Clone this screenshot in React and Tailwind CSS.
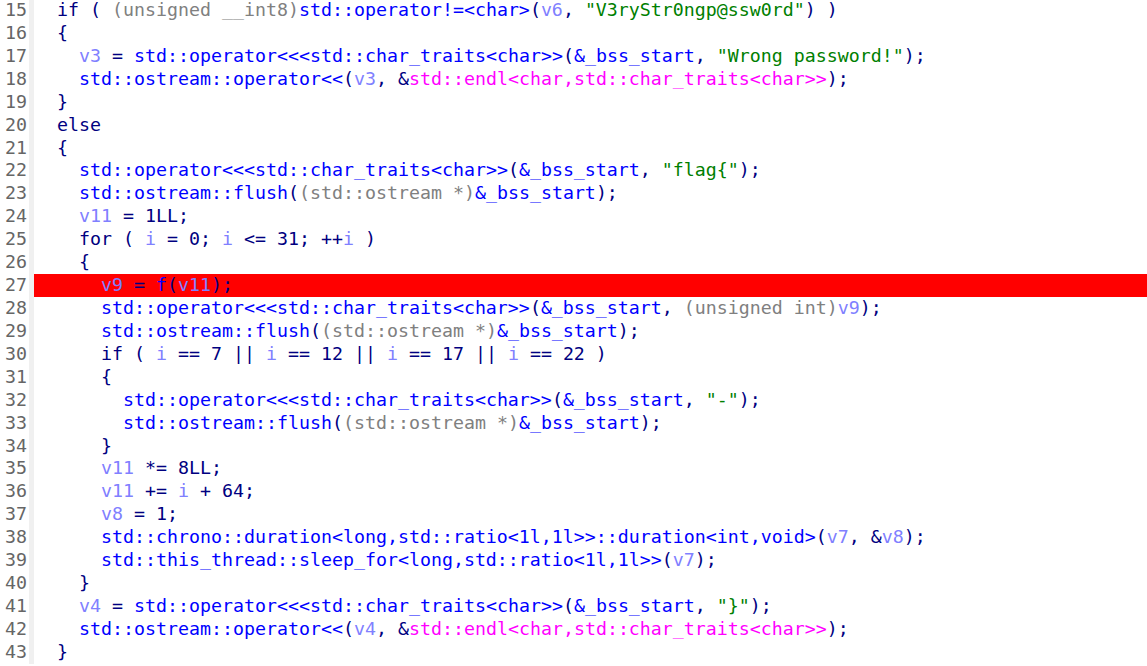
import React from "react";

// n = navy punctuation/keywords, f = names, v = locals, g = casts, s = strings, m = magenta refs
const colors = {
  n: "text-[#000080]",
  f: "text-[#0000ff]",
  v: "text-[#8080ff]",
  g: "text-[#808080]",
  s: "text-[#008000]",
  m: "text-[#ff00ff]",
};

const bssOut = "std::operator<<<std::char_traits<char>>";
const flushLine = (ind) => [
  ["n", ind],
  ["f", "std::ostream::flush"],
  ["n", "("],
  ["g", "(std::ostream *)"],
  ["f", "&_bss_start"],
  ["n", ");"],
];

const lines = [
  [15, [["n", "  if ( "], ["g", "(unsigned __int8)"], ["f", "std::operator!=<char>"], ["n", "("], ["v", "v6"], ["n", ", "], ["s", '"V3ryStr0ngp@ssw0rd"'], ["n", ") )"]]],
  [16, [["n", "  {"]]],
  [17, [["n", "    "], ["v", "v3"], ["n", " = "], ["f", bssOut], ["n", "("], ["f", "&_bss_start"], ["n", ", "], ["s", '"Wrong password!"'], ["n", ");"]]],
  [18, [["n", "    "], ["f", "std::ostream::operator<<"], ["n", "("], ["v", "v3"], ["n", ", &"], ["m", "std::endl<char,std::char_traits<char>>"], ["n", ");"]]],
  [19, [["n", "  }"]]],
  [20, [["n", "  else"]]],
  [21, [["n", "  {"]]],
  [22, [["n", "    "], ["f", bssOut], ["n", "("], ["f", "&_bss_start"], ["n", ", "], ["s", '"flag{"'], ["n", ");"]]],
  [23, flushLine("    ")],
  [24, [["n", "    "], ["v", "v11"], ["n", " = 1LL;"]]],
  [25, [["n", "    for ( "], ["v", "i"], ["n", " = 0; "], ["v", "i"], ["n", " <= 31; ++"], ["v", "i"], ["n", " )"]]],
  [26, [["n", "    {"]]],
  [27, [["n", "      "], ["v", "v9"], ["n", " = "], ["f", "f"], ["n", "("], ["v", "v11"], ["n", ");"]], true],
  [28, [["n", "      "], ["f", bssOut], ["n", "("], ["f", "&_bss_start"], ["n", ", "], ["g", "(unsigned int)"], ["v", "v9"], ["n", ");"]]],
  [29, flushLine("      ")],
  [30, [["n", "      if ( "], ["v", "i"], ["n", " == 7 || "], ["v", "i"], ["n", " == 12 || "], ["v", "i"], ["n", " == 17 || "], ["v", "i"], ["n", " == 22 )"]]],
  [31, [["n", "      {"]]],
  [32, [["n", "        "], ["f", bssOut], ["n", "("], ["f", "&_bss_start"], ["n", ", "], ["s", '"-"'], ["n", ");"]]],
  [33, flushLine("        ")],
  [34, [["n", "      }"]]],
  [35, [["n", "      "], ["v", "v11"], ["n", " *= 8LL;"]]],
  [36, [["n", "      "], ["v", "v11"], ["n", " += "], ["v", "i"], ["n", " + 64;"]]],
  [37, [["n", "      "], ["v", "v8"], ["n", " = 1;"]]],
  [38, [["n", "      "], ["f", "std::chrono::duration<long,std::ratio<1l,1l>>::duration<int,void>"], ["n", "("], ["v", "v7"], ["n", ", &"], ["v", "v8"], ["n", ");"]]],
  [39, [["n", "      "], ["f", "std::this_thread::sleep_for<long,std::ratio<1l,1l>>"], ["n", "("], ["v", "v7"], ["n", ");"]]],
  [40, [["n", "    }"]]],
  [41, [["n", "    "], ["v", "v4"], ["n", " = "], ["f", bssOut], ["n", "("], ["f", "&_bss_start"], ["n", ", "], ["s", '"}"'], ["n", ");"]]],
  [42, [["n", "    "], ["f", "std::ostream::operator<<"], ["n", "("], ["v", "v4"], ["n", ", &"], ["m", "std::endl<char,std::char_traits<char>>"], ["n", ");"]]],
  [43, [["n", "  }"]]],
];

export default function App() {
  return (
    <div
      className="w-[1147px] h-[666px] overflow-hidden bg-white text-[18.27px] leading-[22.93px]"
      style={{ fontFamily: '"DejaVu Sans Mono", "Liberation Mono", monospace' }}
    >
      <div className="flex flex-col -mt-[1px]">
        {lines.map(([num, segs, hit]) => (
          <div key={num} className="flex h-[22.93px]">
            <div className="w-[29px] shrink-0 pr-[2px] text-right text-[#666666]">{num}</div>
            <div className="w-[5px] shrink-0 bg-[#f0f0f0]"></div>
            <div className={`flex-1 pl-[1px] whitespace-pre ${hit ? "bg-[#ff0000]" : ""}`}>
              {segs.map(([c, t], i) => (
                <span key={i} className={colors[c]}>
                  {t}
                </span>
              ))}
            </div>
          </div>
        ))}
      </div>
    </div>
  );
}
